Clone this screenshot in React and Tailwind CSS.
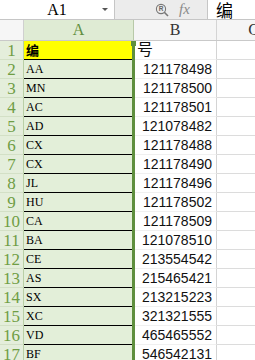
import React from "react";

const rows = [
  ["AA", "121178498"],
  ["MN", "121178500"],
  ["AC", "121178501"],
  ["AD", "121078482"],
  ["CX", "121178488"],
  ["CX", "121178490"],
  ["JL", "121178496"],
  ["HU", "121178502"],
  ["CA", "121178509"],
  ["BA", "121078510"],
  ["CE", "213554542"],
  ["AS", "215465421"],
  ["SX", "213215223"],
  ["XC", "321321555"],
  ["VD", "465465552"],
  ["BF", "546542131"],
];

const serif = { fontFamily: '"Liberation Serif", "Noto Sans CJK SC", serif' };

const Row = ({ num, a, b, first }) => (
  <div className="flex h-[19px]">
    {/* row header */}
    <div
      className="w-[24px] shrink-0 flex items-center justify-center bg-[#e4eedb] border-r border-[#b9cfa6] border-b border-b-[#d3e0c6] text-[#6f9d44] text-[17px] leading-none"
      style={serif}
    >
      {num}
    </div>
    {/* column A */}
    <div
      className={`w-[108px] shrink-0 flex items-center pl-[2px] border-b border-black ${
        first ? "bg-[#ffff00] font-bold text-[13px]" : "bg-[#e3efd9] text-[12px]"
      } text-black leading-none`}
      style={serif}
    >
      {a}
    </div>
    <div className="w-[3px] shrink-0 bg-[#5f8f3e] relative">
      {first && <div className="absolute top-0 -left-[1px] w-[5px] h-[5px] bg-[#5f8f3e]" />}
    </div>
    {/* column B */}
    <div
      className={`w-[82px] shrink-0 flex items-center border-r border-[#d4d4d4] border-b border-b-[#f0f0f0] text-[#111] leading-none ${
        first ? "justify-start pl-[2px] text-[16px]" : "justify-end pr-[4px] text-[14px]"
      }`}
      style={{ fontFamily: '"Liberation Sans", "Noto Sans CJK SC", sans-serif' }}
    >
      {b}
    </div>
    {/* column C */}
    <div className="flex-1 border-b border-[#dcdcdc] bg-white" />
  </div>
);

export default function App() {
  return (
    <div className="w-[255px] h-[360px] overflow-hidden bg-white select-none">
      {/* formula bar */}
      <div className="flex h-[20px] border-b border-[#c6c6c6]">
        <div className="w-[115px] shrink-0 relative flex items-center justify-center bg-white border-r border-[#c6c6c6]">
          <span className="text-[16px] leading-none text-black" style={serif}>
            A1
          </span>
          <span className="absolute right-[6px] top-[8px] w-0 h-0 border-l-[3px] border-r-[3px] border-t-[3px] border-l-transparent border-r-transparent border-t-[#555]" />
        </div>
        <div className="w-[93px] shrink-0 flex items-center bg-[#ececec] border-r border-[#c6c6c6]">
          <svg width="14" height="14" viewBox="0 0 14 14" className="ml-[40px]">
            <circle cx="6" cy="6" r="4.6" fill="none" stroke="#777" strokeWidth="1.1" />
            <line x1="9.3" y1="9.3" x2="13" y2="13" stroke="#777" strokeWidth="1.6" />
            <text x="6" y="8.4" textAnchor="middle" fontSize="6.5" fill="#666" fontFamily="Liberation Sans, sans-serif" fontWeight="bold">R</text>
          </svg>
          <span
            className="ml-[10px] text-[15px] italic text-[#8a8a8a] leading-none"
            style={serif}
          >
            fx
          </span>
        </div>
        <div className="flex-1 flex items-center pl-[8px] bg-white">
          <span
            className="text-[17px] leading-[20px] text-black"
            style={{ fontFamily: '"Noto Sans CJK SC", sans-serif' }}
          >
            编
          </span>
        </div>
      </div>

      {/* column headers */}
      <div className="flex h-[21px] border-b border-[#c9c9c9] bg-[#f5f5f5]">
        <div className="w-[24px] shrink-0 border-r border-[#d0d0d0] bg-[#f6f6f6]" />
        <div
          className="w-[110px] shrink-0 flex items-center justify-center bg-[#dfebd4] border-r border-[#b8c9a8] text-[#5f8f3e] text-[16px] leading-none"
          style={serif}
        >
          A
        </div>
        <div
          className="w-[83px] shrink-0 flex items-center justify-center border-r border-[#d4d4d4] text-[#333] text-[16px] leading-none"
          style={serif}
        >
          B
        </div>
        <div
          className="flex-1 flex items-center justify-end text-[#333] text-[16px] leading-none"
          style={serif}
        >
          <span className="mr-[-4px]">C</span>
        </div>
      </div>

      <Row num={1} a="编" b="号" first />
      {rows.map((r, i) => (
        <Row key={i} num={i + 2} a={r[0]} b={r[1]} />
      ))}
    </div>
  );
}
